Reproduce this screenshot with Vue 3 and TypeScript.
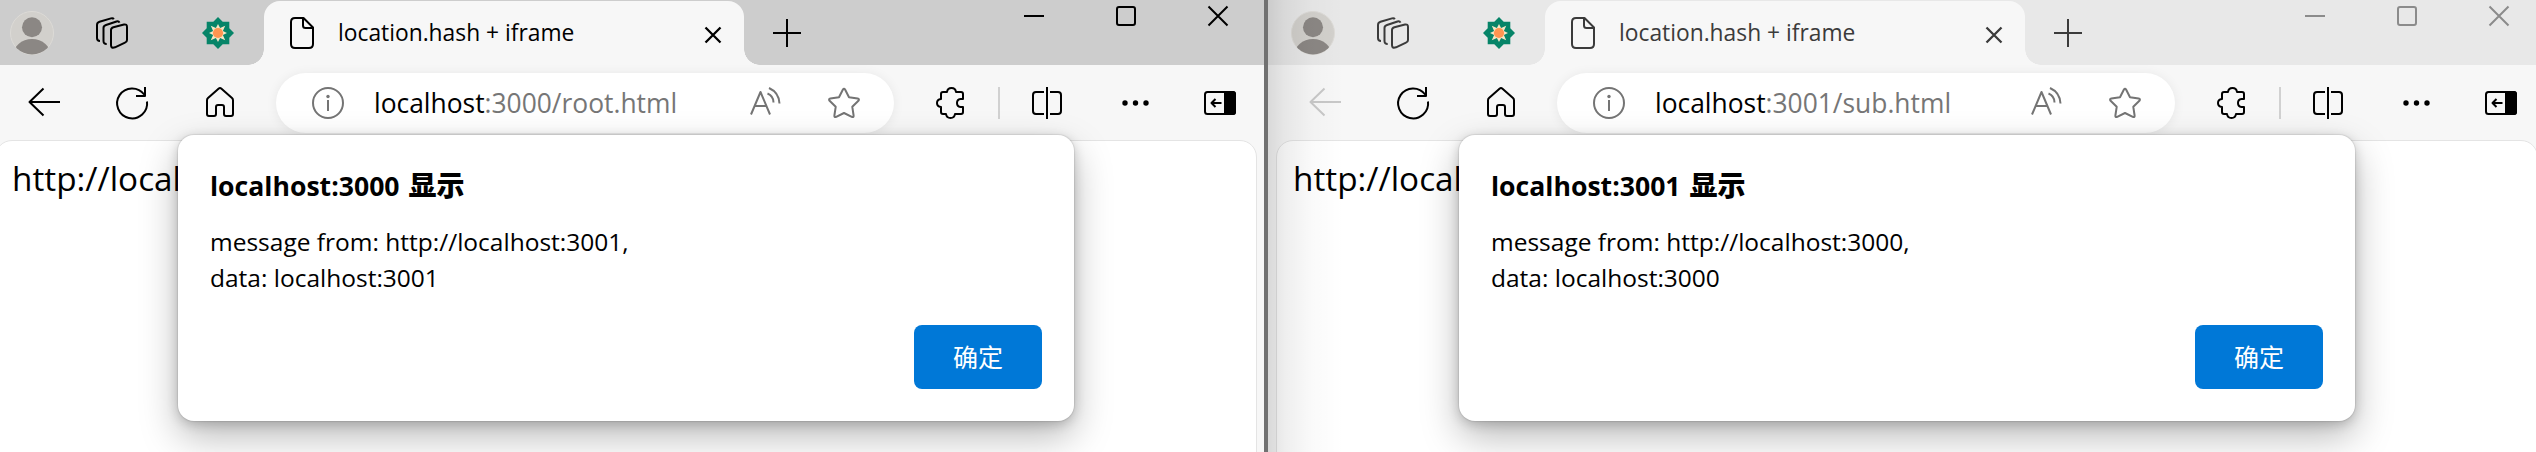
<script setup lang="ts">
interface BrowserWindow {
  host: string
  rest: string
  title: string
  message: string[]
  active: boolean
}

const windows: BrowserWindow[] = [
  {
    host: 'localhost',
    rest: ':3000/root.html',
    title: 'localhost:3000',
    message: ['message from: http://localhost:3001,', 'data: localhost:3001'],
    active: true,
  },
  {
    host: 'localhost',
    rest: ':3001/sub.html',
    title: 'localhost:3001',
    message: ['message from: http://localhost:3000,', 'data: localhost:3000'],
    active: false,
  },
]
</script>

<template>
  <main class="desktop">
    <section v-for="w in windows" :key="w.title" class="window" :class="w.active ? 'active' : 'inactive'">
      <div class="frame">
        <header class="strip">
          <svg class="avatar" viewBox="0 0 44 44">
            <defs>
              <clipPath :id="'clip' + w.title"><circle cx="22" cy="22" r="21.5" /></clipPath>
            </defs>
            <circle cx="22" cy="22" r="21.5" fill="#d2d0cc" stroke="#dddbd7" stroke-width="1" />
            <g :clip-path="`url(#clip${w.title})`" fill="#8b8784">
              <circle cx="22" cy="16.3" r="10" />
              <ellipse cx="22" cy="45" rx="19" ry="17" />
            </g>
          </svg>
          <svg class="icon workspaces" viewBox="0 0 32 32">
            <path d="M17.4 10.2l10.6-2.7q3-.6 3 2.4v13q0 2-2 2.7l-10 4.700q-4 1.400-4-2V13q0-2.100 2.400-2.800z" />
            <path d="M23.500 5.600q-.8-1.700-3-1.100L10 8q-2.500.8-2.500 3v13q0 3 3.200 2.900" />
            <path d="M17.800 2.200q-.8-1.400-2.800-.8L3.500 4.800Q1 5.600 1 8v13q0 3 3 3" />
          </svg>
          <svg class="icon flower" viewBox="0 0 32 32">
            <path d="M16 0l4.700 4.700H27.300V11.300L32 16l-4.700 4.700V27.300H20.700L16 32l-4.700-4.700H4.700V20.700L0 16l4.700-4.700V4.700H11.300z" fill="#068468" stroke="none" />
            <path d="M16 7l2.100 4.100 5.100-2.300-2.300 5.100L25 16l-4.100 2.100 2.300 5.100-5.100-2.300L16 25l-2.100-4.100-5.100 2.300 2.300-5.100L7 16l4.100-2.100-2.300-5.100 5.100 2.300z" fill="#f5e6c4" stroke="none" />
            <circle cx="16" cy="16" r="5.100" fill="#ff9551" stroke="none" />
          </svg>
          <div class="tab">
            <svg class="icon doc" viewBox="0 0 24 32">
              <path d="M5 1h8.500L23 10.500V27q0 4-4 4H5q-4 0-4-4V5q0-4 4-4z" />
              <path d="M13 1.500V8.500q0 2.500 2.500 2.500H23" />
            </svg>
            <span class="tab-title">location.hash + iframe</span>
            <svg class="icon tab-close" viewBox="0 0 18 18"><path d="M1.500 1.500l15 15M16.500 1.500l-15 15" /></svg>
          </div>
          <svg class="icon new-tab" viewBox="0 0 28 28"><path d="M14 0v28M0 14h28" /></svg>
          <div class="controls">
            <svg viewBox="0 0 20 20"><path d="M0 10h20" /></svg>
            <svg viewBox="0 0 20 20"><rect x="1" y="1" width="18" height="18" rx="2" /></svg>
            <svg viewBox="0 0 20 20"><path d="M.5.500l19 19M19.500.500l-19 19" /></svg>
          </div>
        </header>

        <nav class="toolbar">
          <svg class="icon back" viewBox="0 0 32 32"><path d="M32 15H1.500M15.500 1.500L1.500 15l14 13.500" /></svg>
          <svg class="icon reload" viewBox="0 0 32 32">
            <path d="M31 14.500A15 15 0 1 1 28.200 7.500L29 8.800M29 0V9H20" />
          </svg>
          <svg class="icon home" viewBox="0 0 32 32">
            <path d="M14.500 1.700q1.500-1.300 3 0L28 11q1 .9 1 2.300V27q0 2-2 2h-5q-2 0-2-2v-7q0-2-2-2h-4q-2 0-2 2v7q0 2-2 2H5q-2 0-2-2V13.300Q3 11.900 4 11z" />
          </svg>
          <div class="address">
            <svg class="icon soft" viewBox="0 0 32 32">
              <circle cx="16" cy="16" r="15" />
              <path d="M16 13v11" />
              <circle cx="16" cy="9.500" r="1.700" class="solid" />
            </svg>
            <div class="url">{{ w.host }}<span>{{ w.rest }}</span></div>
            <svg class="icon soft read" viewBox="0 0 32 32">
              <path d="M2 27.500L11.500 5L21 27.500M6 19h11" />
              <path d="M18.500 6.500q6 2.500 6 9M20 1q10 4.500 10.500 15.500" />
            </svg>
            <svg class="icon soft star" viewBox="0 0 32 32">
              <path d="M14.800 2.700q1.200-2 2.400 0l3.800 7.500 8.600 1.400q2.200.5.800 2.200L24.300 19.800l1.300 8.700q.2 2.200-1.800 1.300L16 26l-7.800 3.800q-2 .9-1.800-1.300l1.300-8.700L1.600 13.800q-1.400-1.700.8-2.200L11 10.200z" />
            </svg>
          </div>
          <svg class="icon puzzle" viewBox="0 0 32 32">
            <path d="M9 5h4q.5-4 4.500-4T22 5h5q2 0 2 2v5h-2.500q-3.500.5-3.500 4t3.500 4H29v5q0 2-2 2h-6q-.5 4-4.500 4T12 27H9q-2 0-2-2v-5q-4-.5-4-4t4-4V7q0-2 2-2z" />
          </svg>
          <i class="divider"></i>
          <svg class="icon split" viewBox="0 0 32 32">
            <path d="M13 5H5q-3 0-3 3v16q0 3 3 3h8M19 5h8q3 0 3 3v16q0 3-3 3h-8M16 0v32" />
          </svg>
          <svg class="icon more" viewBox="0 0 32 32">
            <g class="solid"><circle cx="5" cy="16" r="2.700" /><circle cx="15.500" cy="16" r="2.700" /><circle cx="26" cy="16" r="2.700" /></g>
          </svg>
          <svg class="icon side" viewBox="0 0 32 32">
            <rect x="1" y="5" width="30" height="22" rx="2.500" />
            <path class="solid" d="M20 4h9q3 0 3 3v18q0 3-3 3h-9z" />
            <path d="M17.500 16H7.500M11.500 12l-4 4 4 4" />
          </svg>
        </nav>

        <div class="page">http://local</div>

        <div class="dialog" role="dialog">
          <h1>{{ w.title }} <b>显示</b></h1>
          <p><span v-for="line in w.message" :key="line">{{ line }}</span></p>
          <button type="button">确定</button>
        </div>
      </div>
    </section>
  </main>
</template>

<style>
body {
  margin: 0;
  overflow: hidden;
}
</style>

<style scoped>
.desktop {
  display: flex;
  width: 2536px;
  height: 452px;
  overflow: hidden;
  background: #fff;
  font-family: "Open Sans", "Noto Sans", "Noto Sans CJK SC", sans-serif;
}

.window {
  position: relative;
  box-sizing: border-box;
  flex: 0 0 1268px;
  display: flex;
  height: 452px;
  overflow: hidden;
  --strip: #cdcdcd;
  --ink: #000;
  --control: #000;
}

.window.active {
  justify-content: flex-end;
  border-right: 4px solid #717171;
}

.window.inactive {
  --strip: #e8e8e8;
  --ink: #3b3b3b;
  --control: #8b8b8b;
}

/* Shadow cast by the focused window onto its neighbour. */
.window.inactive::after {
  content: "";
  position: absolute;
  inset: 0 auto 0 0;
  width: 76px;
  background: linear-gradient(90deg, rgba(0, 0, 0, .12), rgba(0, 0, 0, .065) 22%, rgba(0, 0, 0, .02) 58%, transparent);
}

.frame {
  position: relative;
  flex: 0 0 1277px;
  height: 452px;
  display: flex;
  flex-direction: column;
  background: #f7f7f7;
}

svg {
  display: block;
  flex: none;
  overflow: visible;
}

.icon {
  width: 32px;
  height: 32px;
  fill: none;
  stroke: #000;
  stroke-width: 2;
  stroke-linecap: butt;
  stroke-linejoin: round;
}

.icon .solid {
  fill: #000;
  stroke: none;
}

.strip {
  flex: 0 0 65px;
  display: flex;
  align-items: center;
  padding: 0 36px 0 23px;
  box-sizing: border-box;
  background: var(--strip);
}

.strip .icon {
  stroke: var(--ink);
}

.avatar {
  width: 44px;
  height: 44px;
  margin-top: 1px;
}

.strip .workspaces {
  margin-left: 42px;
}

.strip .flower {
  margin-left: 74px;
}

.tab {
  position: relative;
  box-sizing: border-box;
  display: flex;
  align-items: center;
  align-self: flex-end;
  width: 480px;
  height: 64px;
  margin-left: 30px;
  padding: 0 22px 0 26px;
  border-radius: 16px 16px 0 0;
  background: #f7f7f7;
}

.tab::before,
.tab::after {
  content: "";
  position: absolute;
  bottom: 0;
  width: 16px;
  height: 16px;
}

.tab::before {
  right: 100%;
  background: radial-gradient(circle at 0 0, transparent 15.500px, #f7f7f7 16px);
}

.tab::after {
  left: 100%;
  background: radial-gradient(circle at 100% 0, transparent 15.500px, #f7f7f7 16px);
}

.doc {
  width: 24px;
}

.tab-title {
  flex: 1;
  margin-left: 24px;
  color: var(--ink);
  font-size: 22.800px;
  line-height: 32px;
  white-space: nowrap;
}

.tab-close {
  width: 18px;
  height: 18px;
  margin-top: 3px;
  stroke-width: 2.300;
}

.new-tab {
  width: 28px;
  height: 28px;
  margin-left: 29px;
}

.controls {
  display: flex;
  gap: 72px;
  align-self: flex-start;
  margin: 6px 0 0 auto;
}

.controls svg {
  width: 20px;
  height: 20px;
  fill: none;
  stroke: var(--control);
  stroke-width: 2;
}

.toolbar {
  flex: 0 0 76px;
  display: flex;
  align-items: center;
  padding-left: 41px;
}

.reload,
.home {
  margin-left: 56px;
}

.inactive .back {
  stroke: #c8c8c8;
}

.address {
  box-sizing: border-box;
  display: flex;
  align-items: center;
  width: 618px;
  height: 60px;
  flex: none;
  margin-left: 40px;
  padding: 0 34px 0 36px;
  border-radius: 30px;
  background: #fff;
  box-shadow: 0 1px 12px rgba(0, 0, 0, .07);
}

.icon.soft {
  stroke: #747474;
}

.icon.soft .solid {
  fill: #747474;
}

.url {
  flex: 1;
  margin-left: 30px;
  color: #000;
  font-size: 26.400px;
  line-height: 36px;
  white-space: nowrap;
}

.url span {
  color: #767676;
}

.star {
  margin-left: 47px;
}

.puzzle {
  margin-left: 40px;
}

.divider {
  flex: none;
  width: 2px;
  height: 32px;
  margin-left: 32px;
  background: #d1d1d1;
}

.split {
  margin-left: 31px;
}

.more {
  margin-left: 57px;
}

.side {
  margin-left: 52px;
}

.page {
  box-sizing: border-box;
  flex: none;
  width: 1262px;
  height: 340px;
  margin: -1px 0 0 8px;
  padding: 14px 0 0 16px;
  border: 1px solid #e4e4e4;
  border-radius: 17px;
  background: #fff;
  color: #000;
  font-size: 33.300px;
  line-height: 46px;
}

.dialog {
  position: absolute;
  left: 191px;
  top: 135px;
  box-sizing: border-box;
  width: 896px;
  height: 286px;
  display: flex;
  flex-direction: column;
  padding: 32px 32px 16px;
  border-radius: 16px;
  background: #fff;
  color: #000;
  box-shadow: 0 0 1px 1px rgba(0, 0, 0, .08), 0 16px 38px rgba(0, 0, 0, .27), 0 3px 12px rgba(0, 0, 0, .19);
}

h1 {
  margin: 0;
  font-size: 26.600px;
  line-height: 36px;
  height: 36px;
  font-weight: 700;
}

h1 b {
  margin-left: 2px;
  font-size: 28px;
}

p {
  display: flex;
  flex-direction: column;
  margin: 21px 0 0;
  font-size: 24.500px;
  line-height: 36px;
  white-space: nowrap;
}

button {
  align-self: flex-end;
  width: 128px;
  height: 64px;
  margin-top: 29px;
  padding: 0 0 2px;
  border: 0;
  border-radius: 8px;
  background: #0078d7;
  color: #fff;
  font: 400 25px "Noto Sans CJK SC", sans-serif;
}
</style>
